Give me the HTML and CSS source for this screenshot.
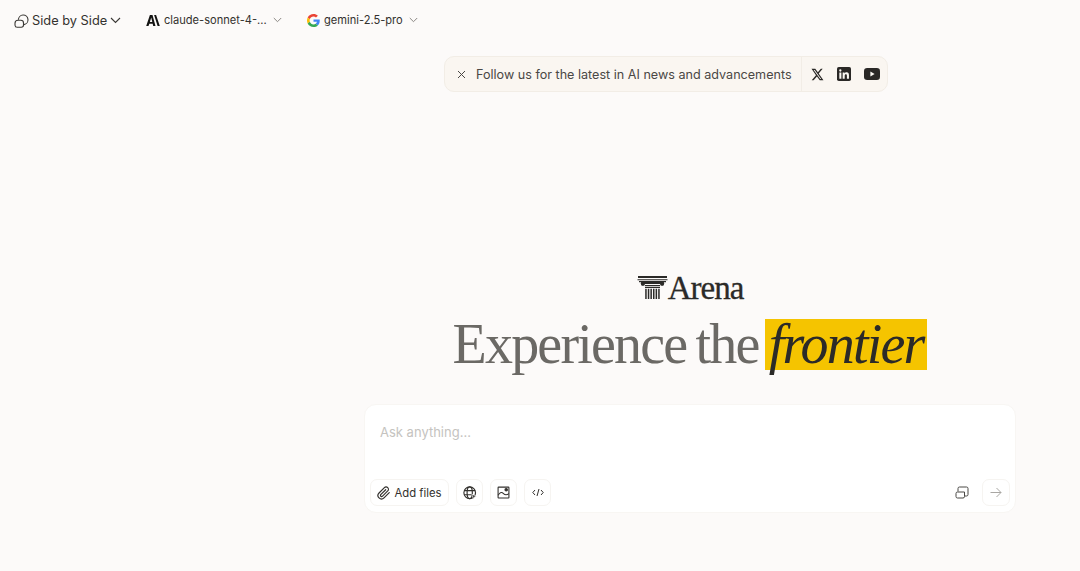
FILE: index.html
```html
<!DOCTYPE html>
<html>
<head>
<meta charset="utf-8">
<title>Arena</title>
<link rel="stylesheet" href="styles.css">
</head>
<body>
<header class="topbar">
	<button class="modeBtn">
		<svg width="15" height="15" viewBox="0 0 15 15" fill="none" stroke="#3a3835" stroke-width="1.100"><path d="M4.400 6.800a4.800 4.800 0 1 1 5.600 4.800"/><path d="M1 10.200a3 3 0 0 1 3-3h2.800a2.700 2.700 0 0 1 2.700 2.700v2.100a2.200 2.200 0 0 1-2.200 2.200H3.200A2.200 2.200 0 0 1 1 12.200z"/></svg>
		<span>Side by Side</span>
		<svg width="11" height="7" viewBox="0 0 11 7" fill="none" stroke="#3a3835" stroke-width="1.100"><path d="M1 1l4.500 4.500L10 1"/></svg>
	</button>
	<button class="modelBtn modelClaude">
		<svg width="14" height="11" viewBox="0 0 14 11" fill="#141413"><path d="M3.900 0h2.600l3 11H7.200l-.5-2.200H3.300L2.500 11H.2zM3.900 6.900h2.400L5.200 2.600zM8.100 0h2l3.700 11h-2.200z"/></svg>
		<span class="modelName">claude-sonnet-4-...</span>
		<svg width="9" height="6" viewBox="0 0 9 6" fill="none" stroke="#8a8783" stroke-width="1"><path d="M.8 1l3.700 3.700L8.200 1"/></svg>
	</button>
	<button class="modelBtn modelGemini">
		<svg width="13" height="13" viewBox="0 0 48 48"><path fill="#EA4335" d="M24 9.500c3.500 0 6.700 1.200 9.200 3.600l6.900-6.900C35.900 2.400 30.500 0 24 0 14.600 0 6.500 5.400 2.600 13.200l8 6.200C12.400 13.700 17.700 9.500 24 9.500z"/><path fill="#4285F4" d="M47 24.500c0-1.600-.1-3.100-.4-4.500H24v9h12.900c-.6 3-2.200 5.500-4.700 7.200l7.700 6C44.400 37.500 47 31.600 47 24.500z"/><path fill="#FBBC05" d="M10.500 28.600c-.5-1.500-.8-3-.8-4.600s.3-3.100.8-4.600l-8-6.200C.9 16.500 0 20.100 0 24s.9 7.500 2.600 10.800z"/><path fill="#34A853" d="M24 48c6.500 0 11.900-2.100 15.900-5.800l-7.700-6c-2.200 1.500-4.900 2.300-8.200 2.300-6.300 0-11.600-4.200-13.500-9.900l-8 6.200C6.500 42.600 14.600 48 24 48z"/></svg>
		<span class="modelName">gemini-2.5-pro</span>
		<svg width="9" height="6" viewBox="0 0 9 6" fill="none" stroke="#8a8783" stroke-width="1"><path d="M.8 1l3.700 3.700L8.200 1"/></svg>
	</button>
</header>
<main class="content">
	<div class="banner">
		<div class="bannerMsg">
			<svg width="9" height="9" viewBox="0 0 9 9" fill="none" stroke="#4a4845" stroke-width="1"><path d="M1 1l7 7M8 1L1 8"/></svg>
			<span>Follow us for the latest in AI news and advancements</span>
		</div>
		<div class="bannerLinks">
			<svg width="13" height="13" viewBox="0 0 24 24" fill="#2a2826"><path d="M18.200 1.500h3.400l-7.400 8.500L23 22.500h-6.800l-5.300-7-6.100 7H1.300l7.900-9.100L.9 1.500h7l4.800 6.400zM17 20.400h1.900L6.800 3.500H4.800z"/></svg>
			<svg width="14" height="14" viewBox="0 0 24 24"><rect width="24" height="24" rx="3" fill="#2a2826"/><path fill="#fbf8f3" d="M4 9.500h3.500V20H4zM5.700 4a2 2 0 1 1 0 4 2 2 0 0 1 0-4zM9.700 9.500H13V11c.6-1 1.900-1.800 3.500-1.800 3 0 4 1.900 4 4.900V20H17v-5.200c0-1.400-.4-2.500-1.800-2.500s-2 1.100-2 2.500V20H9.700z"/></svg>
			<svg width="16" height="12" viewBox="0 0 16 12"><rect width="16" height="12" rx="3.200" fill="#2a2826"/><path fill="#fbf8f3" d="M6.400 3.400L10.600 6 6.400 8.600z"/></svg>
		</div>
	</div>
	<section class="hero">
		<div class="brand">
			<svg width="31" height="24" viewBox="0 0 31 24" fill="#2b2a28"><path d="M1 0h29v2H1zM.5 3.200h30v1H.5z"/><path d="M2 5h27v1.200h-2.400v3.400h-3V8H7.400v1.600h-3V6.200H2z"/><circle cx="5.900" cy="7.600" r="2.100"/><circle cx="25.100" cy="7.600" r="2.100"/><path d="M8 9h15v1.300H8zM8 11h15v1H8zM8.200 12.800h1.500V23H8.200zM10.800 12.800h1.500V23h-1.500zM13.400 12.800h1.500V23h-1.500zM16 12.800h1.500V23H16zM18.600 12.800h1.500V23h-1.500zM21.200 12.800h1.500V23h-1.500z"/></svg>
			<span class="brandName">Arena</span>
		</div>
		<h1 class="headline">Experience the <em class="mark">frontier</em></h1>
	</section>
	<div class="composer">
		<div class="prompt">Ask anything...</div>
		<div class="tools">
			<button class="toolBtn addFiles">
				<svg width="14" height="14" viewBox="0 0 24 24" fill="none" stroke="#33312e" stroke-width="2" stroke-linecap="round"><path d="M21 11.500l-9 9a6 6 0 0 1-8.500-8.500l9.200-9.200a4 4 0 0 1 5.700 5.700l-9.200 9.200a2 2 0 0 1-2.800-2.800l8.500-8.500"/></svg>
				<span>Add files</span>
			</button>
			<button class="toolBtn square">
				<svg width="14" height="14" viewBox="0 0 24 24" fill="none" stroke="#33312e" stroke-width="2"><circle cx="11.500" cy="11.500" r="10"/><ellipse cx="11.500" cy="11.500" rx="4.500" ry="10"/><path d="M2 8h19M2 15h14"/><path d="M15 14l8 3.500-3.500 1.200-1.200 3.800z" fill="#33312e" stroke="#fff" stroke-width="1"/></svg>
			</button>
			<button class="toolBtn square">
				<svg width="13" height="13" viewBox="0 0 24 24" fill="none" stroke="#33312e" stroke-width="2"><rect x="2" y="2" width="20" height="20" rx="1"/><path d="M2 17c4-6 7-6 10-3s6 3 10 0"/><circle cx="17" cy="7" r="2.300" fill="#33312e"/></svg>
			</button>
			<button class="toolBtn square">
				<svg width="12" height="9" viewBox="0 0 12 9" fill="none" stroke="#33312e" stroke-width="1"><path d="M3 2L.8 4.500 3 7M9 2l2.200 2.500L9 7M7 1L5 8"/></svg>
			</button>
			<svg class="sideIcon" width="14" height="13" viewBox="0 0 14 13" fill="none" stroke="#4a4845" stroke-width="1"><path d="M3 5.500V2.500A1.500 1.500 0 0 1 4.500 1h7A1.500 1.500 0 0 1 13 2.500v6a1.500 1.500 0 0 1-1.500 1.500H9.500"/><path d="M1 7.500a1.500 1.500 0 0 1 1.500-1.500h7v4.500A1.500 1.500 0 0 1 8 12H2.500A1.500 1.500 0 0 1 1 10.500z"/></svg>
			<button class="toolBtn square sendBtn">
				<svg width="12" height="11" viewBox="0 0 12 11" fill="none" stroke="#a9a7a3" stroke-width="1"><path d="M.5 5.500h10.500M6.500 1l4.500 4.500L6.500 10"/></svg>
			</button>
		</div>
	</div>
</main>
</body>
</html>
```
FILE: styles.css
```css
*
{
	box-sizing: border-box;
}
body
{
	margin: 0;
	height: 571px;
	overflow: hidden;
	background-color: #fcfaf9;
	font-family: Inter, "Liberation Sans", sans-serif;
	color: #33312e;
}
button
{
	display: flex;
	align-items: center;
	background: none;
	border: 0;
	padding: 0;
	font-family: inherit;
	color: inherit;
}
.topbar
{
	display: flex;
	align-items: center;
	height: 40px;
	padding-left: 14px;
}
.modeBtn
{
	gap: 3px;
	font-size: 12.800px;
	width: 132px;
}
.modelBtn
{
	gap: 4px;
	font-size: 11.100px;
}
.modelClaude
{
	width: 161px;
}
.modelName
{
	margin-right: 2px;
	white-space: nowrap;
}
.content
{
	display: flex;
	flex-direction: column;
	align-items: center;
	padding-left: 300px;
}
.banner
{
	display: flex;
	align-self: flex-start;
	height: 36px;
	width: 444px;
	margin-top: 16px;
	margin-left: 144px;
	background-color: #faf6f1;
	border: 1px solid #f2ede6;
	border-radius: 10px;
}
.bannerMsg
{
	display: flex;
	align-items: center;
	gap: 10px;
	width: 357px;
	padding-left: 12px;
	font-size: 12.600px;
	white-space: nowrap;
	color: #4a4845;
	border-right: 1px solid #f2ede6;
}
.bannerLinks
{
	display: flex;
	align-items: center;
	gap: 13px;
	padding-left: 9px;
}
.hero
{
	display: flex;
	flex-direction: column;
	align-items: center;
	margin-top: 179px;
}
.brand
{
	display: flex;
	align-items: center;
	gap: 0;
	height: 34px;
}
.brandName
{
	font-family: "Liberation Serif", serif;
	font-size: 33px;
	letter-spacing: -1px;
	color: #2b2a28;
	-webkit-text-stroke: 0.300px #2b2a28;
}
.headline
{
	margin: 10px 0 0;
	font-family: "Liberation Serif", serif;
	font-weight: 400;
	font-size: 56px;
	line-height: 58px;
	letter-spacing: -1.800px;
	word-spacing: -3px;
	color: #6b6965;
	white-space: nowrap;
}
.mark
{
	display: inline-block;
	height: 51px;
	margin-left: -3px;
	line-height: 50px;
	padding: 0 4px;
	background-color: #f5c400;
	color: #2b2a28;
}
.composer
{
	display: flex;
	flex-direction: column;
	justify-content: space-between;
	width: 652px;
	height: 109px;
	margin-top: 31px;
	padding: 19px 5px 6px;
	background-color: #fff;
	border: 1px solid #f8f6f3;
	border-radius: 12px;
}
.prompt
{
	padding-left: 10px;
	font-size: 13px;
	color: #c5c3c0;
}
.tools
{
	display: flex;
	align-items: center;
	gap: 7px;
}
.toolBtn
{
	justify-content: center;
	height: 27px;
	background-color: #fff;
	border: 1px solid #f6f4f1;
	border-radius: 7px;
}
.addFiles
{
	gap: 3px;
	width: 79px;
	font-size: 11.300px;
}
.square
{
	width: 27px;
}
.sendBtn
{
	width: 28px;
}
.sideIcon
{
	margin-left: auto;
	margin-right: 6px;
}
```
